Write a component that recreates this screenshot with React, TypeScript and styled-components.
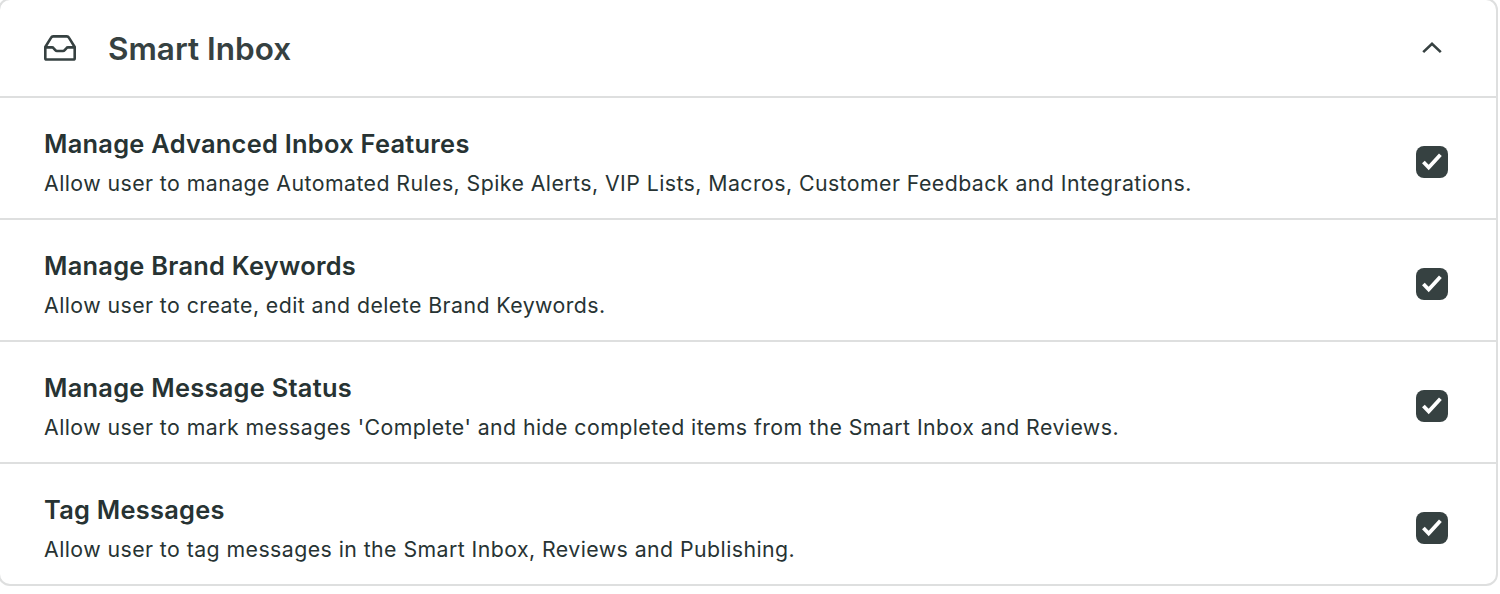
import React from "react";
import styled, { createGlobalStyle } from "styled-components";

const Global = createGlobalStyle`
  body { margin: 0; background: #fff; overflow: hidden; }
  * { box-sizing: border-box; }
`;

const Panel = styled.section`
  width: 1500px;
  height: 588px;
  margin-left: -2px;
  margin-top: -2px;
  border: 2px solid #dedfdf;
  border-radius: 12px;
  font-family: Inter, "Liberation Sans", sans-serif;
  color: #273333;
`;

const Header = styled.header`
  display: flex;
  align-items: center;
  height: 96px;
  padding: 0 48px 0 44px;
`;

const Title = styled.h2`
  flex: 1;
  margin: 2px 0 0 32px;
  font-size: 31.5px;
  line-height: 40px;
  font-weight: 600;
  letter-spacing: 0;
  color: #364141;
`;

const Row = styled.label`
  display: flex;
  align-items: center;
  justify-content: space-between;
  height: 122px;
  padding: 12px 48px 0 44px;
  border-top: 2px solid #dedfdf;
`;

const Name = styled.h3`
  margin: 0;
  font-size: 25.4px;
  line-height: 38px;
  font-weight: 600;
  letter-spacing: 0.27px;
`;

const Description = styled.p`
  margin: 0;
  font-size: 21.3px;
  line-height: 40px;
  letter-spacing: 0.435px;
`;

const Check = styled.span`
  display: flex;
  width: 32px;
  height: 32px;
  margin-bottom: 4px;
  border-radius: 8px;
  background: #364141;
`;

const permissions = [
  { name: "Manage Advanced Inbox Features", text: "Allow user to manage Automated Rules, Spike Alerts, VIP Lists, Macros, Customer Feedback and Integrations." },
  { name: "Manage Brand Keywords", text: "Allow user to create, edit and delete Brand Keywords." },
  { name: "Manage Message Status", text: "Allow user to mark messages 'Complete' and hide completed items from the Smart Inbox and Reviews." },
  { name: "Tag Messages", text: "Allow user to tag messages in the Smart Inbox, Reviews and Publishing." },
];

export default function App() {
  return (
    <>
      <Global />
      <Panel>
        <Header>
          <svg width="32" height="32" viewBox="0 0 32 32" fill="none" stroke="#364141" strokeWidth="2.6" strokeLinejoin="round">
            <path d="M1.3 15 7.1 5.6Q7.8 4.4 9.2 4.4H22.8Q24.2 4.4 24.9 5.6L30.7 15V26.2Q30.7 27.5 29.4 27.5H2.6Q1.3 27.5 1.3 26.2ZM1.3 15.4H8Q9 15.4 9.7 16.3L11.3 18.2Q12 19 13 19H19Q20 19 20.7 18.2L22.3 16.3Q23 15.4 24 15.4H30.7" />
          </svg>
          <Title>Smart Inbox</Title>
          <svg width="32" height="32" viewBox="0 0 32 32" fill="none" stroke="#364141" strokeWidth="2.6">
            <path d="m7.2 20.1 8.8-8.4 8.8 8.4" />
          </svg>
        </Header>
        {permissions.map((p) => (
          <Row key={p.name}>
            <div>
              <Name>{p.name}</Name>
              <Description>{p.text}</Description>
            </div>
            <Check>
              <svg width="32" height="32" viewBox="0 0 32 32" fill="none" stroke="#fff" strokeWidth="3.8">
                <path d="m7.4 16 5.3 5.5L24.4 8.7" />
              </svg>
            </Check>
          </Row>
        ))}
      </Panel>
    </>
  );
}
